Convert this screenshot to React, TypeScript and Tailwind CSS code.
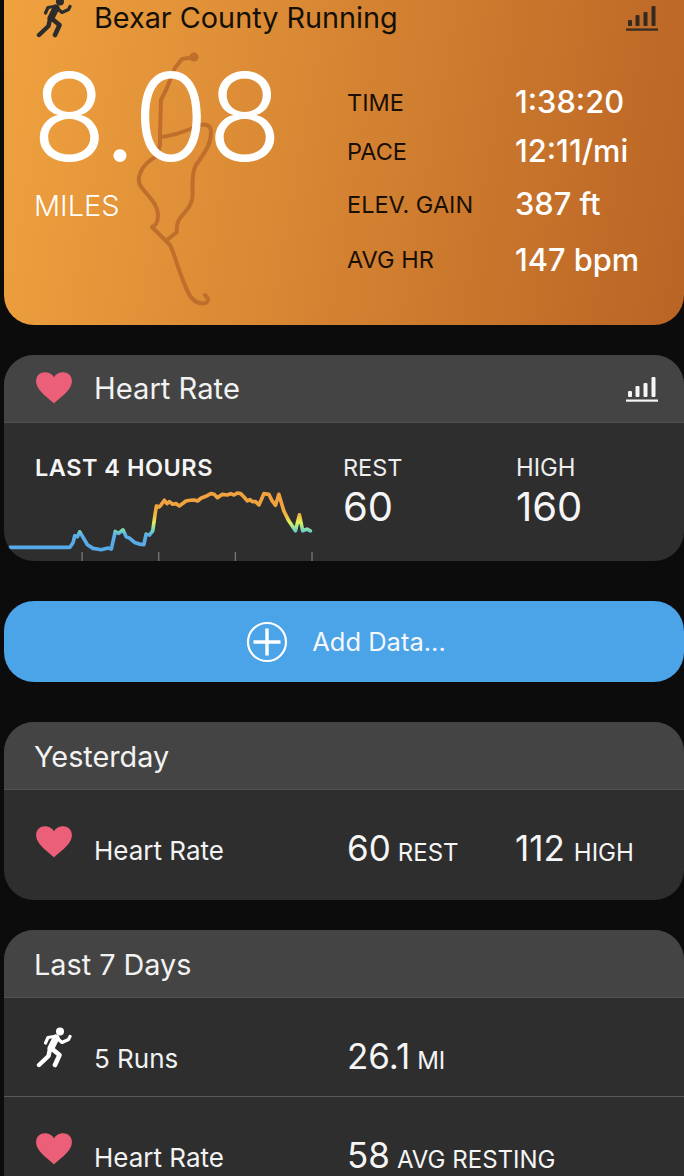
const Runner = ({ color }: { color: string }) => (
  <svg viewBox="0 0 36 42" className="w-[36px] h-[42px] shrink-0">
    <circle cx="24" cy="5.5" r="4" fill={color} />
    <g fill="none" stroke={color} strokeLinecap="round" strokeLinejoin="round">
      <path d="M20 12 L15 22" strokeWidth="7" />
      <path d="M21 12 L26 16.5 L32.5 13.5 L34 10.5" strokeWidth="3.2" />
      <path d="M18 10.5 L12 11.5 L9.5 17" strokeWidth="3.2" />
      <path d="M14 23 L12.5 30 L3 39" strokeWidth="4.4" />
      <path d="M15 22 L23.5 29 L19 39" strokeWidth="4.6" />
    </g>
  </svg>
);

const Heart = () => (
  <svg viewBox="0 0 36 32" className="w-[36px] h-[32px] shrink-0">
    <path
      d="M18 31.5 C15 28 1 19 0.2 10.5 C-0.5 4 4 0.3 9 0.3 C13 0.3 16.5 2.5 18 5.5 C19.5 2.5 23 0.3 27 0.3 C32 0.3 36.5 4 35.8 10.5 C35 19 21 28 18 31.5 Z"
      fill="#ec5f78"
    />
  </svg>
);

const Bars = ({ color }: { color: string }) => (
  <svg viewBox="0 0 32 26" className="w-[32px] h-[26px]">
    <g fill={color}>
      <rect x="2" y="15" width="4" height="6" rx="1" />
      <rect x="9.5" y="10" width="4" height="11" rx="1" />
      <rect x="17.5" y="7" width="4" height="14" rx="1" />
      <rect x="25.5" y="1" width="4" height="20" rx="1" />
      <rect x="0" y="23.5" width="32" height="2.2" />
    </g>
  </svg>
);

const chartPoints =
  "25,590 205,590 215,575 220,555 228,558 235,543 245,560 258,582 275,593 300,597 320,592 330,595 342,542 352,548 365,537 375,558 385,562 400,575 415,580 428,582 435,550 445,553 455,540 462,490 466,465 474,468 480,462 490,448 498,458 505,452 515,460 525,458 535,465 545,458 555,450 568,448 580,447 590,450 600,442 615,436 630,428 640,430 650,440 665,430 680,432 690,428 700,432 710,426 720,428 730,438 740,450 748,446 755,452 765,452 775,462 790,428 805,430 815,450 825,463 835,430 850,480 865,510 885,540 897,492 907,540 920,535 930,540";

const statRows = [
  { label: "TIME", value: "1:38:20", h: "h-[49px]" },
  { label: "PACE", value: "12:11/mi", h: "h-[49px]" },
  { label: "ELEV. GAIN", value: "387 ft", h: "h-[57px]" },
  { label: "AVG HR", value: "147 bpm", h: "h-[54px]" },
];

const Row = ({
  icon,
  label,
  value,
  unit,
  value2,
  unit2,
  border,
  iconTop,
}: {
  icon: React.ReactNode;
  label: string;
  value: string;
  unit: string;
  value2?: string;
  unit2?: string;
  border?: boolean;
  iconTop: string;
}) => (
  <div className={`flex h-[99px] pl-[32px] ${border ? "border-b border-[#5a5a5a]" : ""}`}>
    <div className={`w-[59px] ${iconTop}`}>{icon}</div>
    <div className="w-[253px] pt-[46px] text-[26px] leading-[30px] text-[#f2f2f2] -ml-[1px] mr-[1px]">{label}</div>
    <div className="w-[167px] pt-[38px] leading-[40px] whitespace-nowrap text-[#f5f5f5] -ml-[1px] mr-[1px]">
      <span className="text-[35px]">{value}</span>
      <span className="text-[24px] ml-[7px]">{unit}</span>
    </div>
    {value2 && (
      <div className="pt-[38px] leading-[40px] whitespace-nowrap text-[#f5f5f5]">
        <span className="text-[35px]">{value2}</span>
        <span className="text-[24px] ml-[9px]">{unit2}</span>
      </div>
    )}
  </div>
);

export default function App() {
  return (
    <div
      className="h-[1176px] w-[684px] overflow-hidden bg-[#0c0c0d] pl-[4px]"
      style={{ fontFamily: "Inter, 'Noto Sans', sans-serif" }}
    >
      {/* Activity card */}
      <div className="relative h-[325px] overflow-hidden rounded-b-[30px] bg-linear-[100deg] from-[#f0a23f] to-[#b96425]">
        <svg viewBox="0 0 684 340" className="absolute -left-[4px] top-0 w-[684px] h-[340px]">
          <path
            d="M195 57 L182 59 L175 68 L166 90 L161 100 L160 135 L160 145 L157 156 C140 165 135 180 142 188 C150 198 158 205 158 215 C158 222 155 226 152 227 L170 245 C175 255 178 270 185 285 C190 300 197 305 206 303 C210 300 207 297 205 295 M160 137 C172 136 180 133 196 127 C204 122 211 125 211 132 C211 145 205 152 196 165 C190 175 194 190 192 200 C188 215 175 215 177 232 L167 240"
            fill="none"
            stroke="#c06e2c"
            strokeWidth="4"
            strokeLinecap="round"
            strokeLinejoin="round"
          />
          <circle cx="194" cy="57" r="4.5" fill="#c06e2c" />
        </svg>

        <div className="relative flex h-[36px] items-center justify-between pl-[32px] pr-[26px]">
          <div className="flex items-center">
            <div className="w-[59px] -mt-[2px]">
              <Runner color="#2c2c2c" />
            </div>
            <span className="text-[28.8px] leading-[36px] text-[#141008] -ml-[1px]">Bexar County Running</span>
          </div>
          <Bars color="#332a20" />
        </div>

        <div className="relative flex">
          <div className="w-[344px] pl-[28px]">
            <div className="text-[122px] leading-[122px] font-[350] text-white -tracking-[1px] mt-[20px]">8.08</div>
            <div className="text-[29px] leading-[36px] font-light text-white mt-[10px] pl-[2px]">MILES</div>
          </div>
          <div className="pt-[42px]">
            {statRows.map((s) => (
              <div key={s.label} className={`flex ${s.h} items-center`}>
                <div className="w-[167px] text-[23.5px] text-[#1a0f05] -ml-[1px] mr-[1px]">{s.label}</div>
                <div className="text-[30.8px] font-medium text-white whitespace-nowrap">{s.value}</div>
              </div>
            ))}
          </div>
        </div>
      </div>

      {/* Heart rate card */}
      <div className="mt-[30px] h-[206px] overflow-hidden rounded-[30px] bg-[#2e2e2e]">
        <div className="flex h-[68px] items-center justify-between border-b border-[#505050] bg-[#444444] pl-[32px] pr-[26px]">
          <div className="flex items-center">
            <div className="w-[59px]">
              <Heart />
            </div>
            <span className="text-[29.2px] text-[#f2f2f2] -ml-[1px] mt-[1px]">Heart Rate</span>
          </div>
          <Bars color="#f5f5f5" />
        </div>
        <div className="flex h-[138px]">
          <div className="w-[339px] shrink-0">
            <div className="pl-[31px] pt-[31px] text-[23.5px] leading-[28px] font-semibold tracking-[0.5px] text-[#f5f5f5]">LAST 4 HOURS</div>
            <svg viewBox="0 420 1017 214" className="w-[339px] h-[71px] mt-[9px]">
              <defs>
                <linearGradient id="hr" gradientUnits="userSpaceOnUse" x1="0" y1="430" x2="0" y2="600">
                  <stop offset="0.2" stopColor="#f0a23e" />
                  <stop offset="0.36" stopColor="#f2b23e" />
                  <stop offset="0.5" stopColor="#dff05c" />
                  <stop offset="0.62" stopColor="#7fdcb0" />
                  <stop offset="0.72" stopColor="#5ab0e8" />
                  <stop offset="1" stopColor="#55a8e6" />
                </linearGradient>
              </defs>
              <g transform="translate(-9 0)">
                <polyline points={chartPoints} fill="none" stroke="url(#hr)" strokeWidth="11" strokeLinejoin="round" strokeLinecap="round" />
                <g stroke="#777777" strokeWidth="4">
                  <line x1="242" y1="604" x2="242" y2="634" />
                  <line x1="473" y1="604" x2="473" y2="634" />
                  <line x1="704" y1="604" x2="704" y2="634" />
                  <line x1="935" y1="604" x2="935" y2="634" />
                </g>
              </g>
            </svg>
          </div>
          <div className="w-[173px] pt-[31px]">
            <div className="text-[23.5px] leading-[28px] text-[#ededed]">REST</div>
            <div className="text-[40px] leading-[46px] mt-[2px] text-[#f5f5f5]">60</div>
          </div>
          <div className="pt-[31px]">
            <div className="text-[23.8px] leading-[28px] text-[#ededed]">HIGH</div>
            <div className="text-[40px] leading-[46px] mt-[2px] text-[#f5f5f5]">160</div>
          </div>
        </div>
      </div>

      {/* Add data */}
      <div className="mt-[40px] flex h-[81px] items-center justify-center rounded-[30px] bg-[#4ba3e8] pl-[4px]">
        <svg viewBox="0 0 42 42" className="w-[42px] h-[42px] mr-[24px]">
          <circle cx="21" cy="21" r="19" fill="none" stroke="white" strokeWidth="2.2" />
          <path d="M21 7.5 V34.5 M7.5 21 H34.5" stroke="white" strokeWidth="3.4" />
        </svg>
        <span className="text-[25.5px] text-[#f5f8fc] mt-[1px]">Add Data...</span>
      </div>

      {/* Yesterday */}
      <div className="mt-[40px] h-[178px] overflow-hidden rounded-[30px] bg-[#2e2e2e]">
        <div className="flex h-[68px] items-center border-b border-[#505050] bg-[#444444] pl-[30px] pt-[2px] text-[28.8px] text-[#f2f2f2]">Yesterday</div>
        <Row icon={<Heart />} iconTop="pt-[36px]" label="Heart Rate" value="60" unit="REST" value2="112" unit2="HIGH" />
      </div>

      {/* Last 7 Days */}
      <div className="mt-[30px] h-[300px] overflow-hidden rounded-t-[30px] bg-[#2e2e2e]">
        <div className="flex h-[68px] items-center border-b border-[#505050] bg-[#444444] pl-[30px] pt-[2px] text-[28.8px] text-[#f2f2f2]">Last 7 Days</div>
        <Row icon={<Runner color="#ffffff" />} iconTop="pt-[28px]" label="5 Runs" value="26.1" unit="MI" border />
        <Row icon={<Heart />} iconTop="pt-[36px]" label="Heart Rate" value="58" unit="AVG RESTING" />
      </div>
    </div>
  );
}
